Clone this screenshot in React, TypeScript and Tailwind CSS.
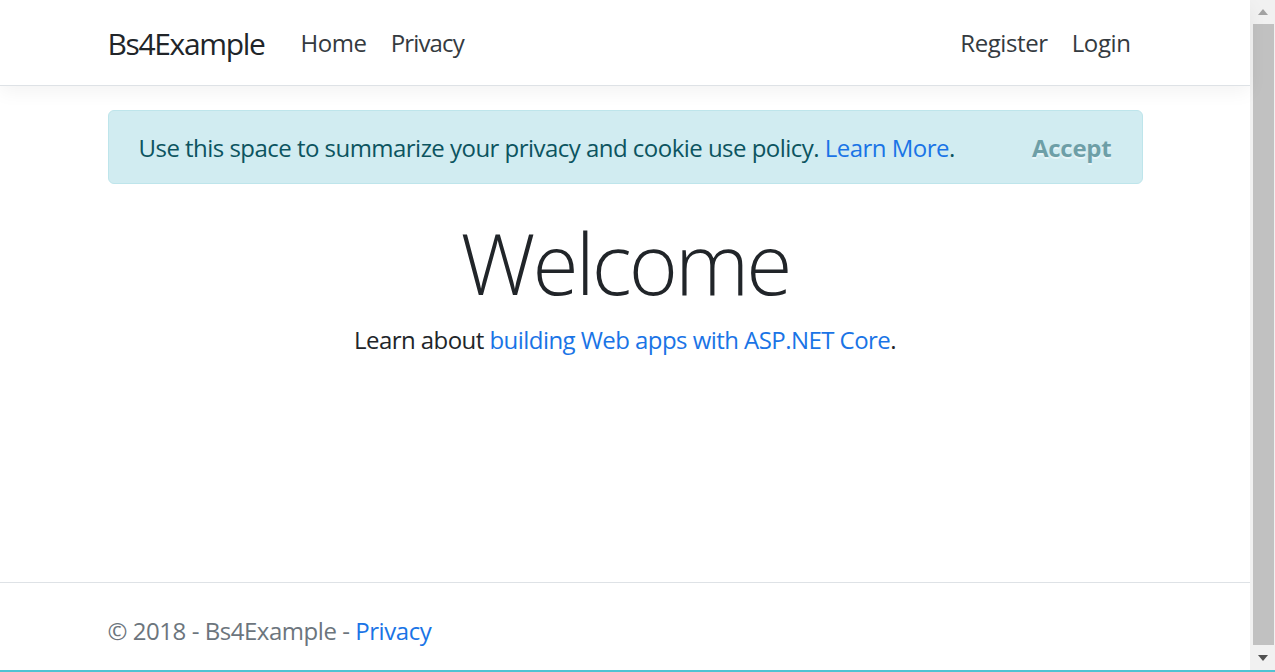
export default function App() {
  const font = "font-['Open_Sans','Noto_Sans',sans-serif]";
  return (
    <div className={`flex h-[672px] w-full flex-col overflow-hidden bg-white ${font}`}>
      <div className="flex min-h-0 flex-1">
        {/* page */}
        <div className="flex min-w-0 flex-1 flex-col">
          {/* navbar */}
          <header className="relative z-10 h-[85.5px] shrink-0 border-b-[1.5px] border-[#dee2e6] bg-white shadow-[0_6px_18px_rgba(0,0,0,0.05)]">
            <nav className="mx-auto flex h-full w-[1080px] items-center px-[22.5px] pt-[2px] tracking-[-0.025em]">
              <span className="mr-[24px] text-[30px] leading-[45px] tracking-[-0.045em] text-[#212529]">Bs4Example</span>
              <a className="px-[12px] text-[24px] leading-[36px] text-[#343a40]">Home</a>
              <a className="px-[12px] text-[24px] leading-[36px] tracking-[-0.035em] text-[#343a40]">Privacy</a>
              <div className="ml-auto flex">
                <a className="px-[12px] text-[24px] leading-[36px] text-[#343a40]">Register</a>
                <a className="px-[12px] text-[24px] leading-[36px] text-[#343a40]">Login</a>
              </div>
            </nav>
          </header>

          {/* main */}
          <main className="mx-auto w-[1080px] flex-1 px-[22.5px] pt-[24px]">
            <div className="flex h-[74px] items-center justify-between rounded-[6px] border-[1.5px] border-[#bee5eb] bg-[#d1ecf1] px-[30px] pt-[3px] text-[24px] text-[#0c5460]">
              <span className="tracking-[-0.022em]">
                Use this space to summarize your privacy and cookie use policy.{" "}
                <a className="text-[#1a74e6]">Learn More</a>.
              </span>
              <button className="font-bold tracking-[-0.01em] text-[#0c5460] opacity-50 [text-shadow:0_1.5px_0_#fff]">Accept</button>
            </div>

            <div className="mt-[29px] text-center">
              <h1 className="text-[84px] font-light leading-[100px] tracking-[-0.035em] text-[#212529]">Welcome</h1>
              <p className="mt-[9px] text-[24px] leading-[36px] tracking-[-0.023em] text-[#212529]">
                Learn about <a className="text-[#1a74e6]">building Web apps with ASP.NET Core</a>.
              </p>
            </div>
          </main>

          {/* footer */}
          <footer className="h-[88px] shrink-0 border-t-[1.5px] border-[#dee2e6]">
            <div className="mx-auto w-[1080px] px-[22.5px] text-[24px] leading-[96px] tracking-[-0.019em] text-[#6c757d]">
              © 2018 - Bs4Example - <a className="text-[#1a74e6]">Privacy</a>
            </div>
          </footer>
        </div>

        {/* scrollbar */}
        <div className="flex w-[25px] shrink-0 flex-col items-center bg-[#f1f1f1]">
          <div className="flex h-[24px] items-center justify-center">
            <svg width="10" height="6" viewBox="0 0 10 6"><path d="M5 0L10 6H0Z" fill="#a3a3a3" /></svg>
          </div>
          <div className="ml-[2px] w-[21px] flex-1 bg-[#c1c1c1]" />
          <div className="flex h-[25px] items-center justify-center">
            <svg width="10" height="6" viewBox="0 0 10 6"><path d="M0 0H10L5 6Z" fill="#505050" /></svg>
          </div>
        </div>
      </div>
      <div className="h-[2px] shrink-0 bg-[#4fc3d3]" />
    </div>
  );
}
